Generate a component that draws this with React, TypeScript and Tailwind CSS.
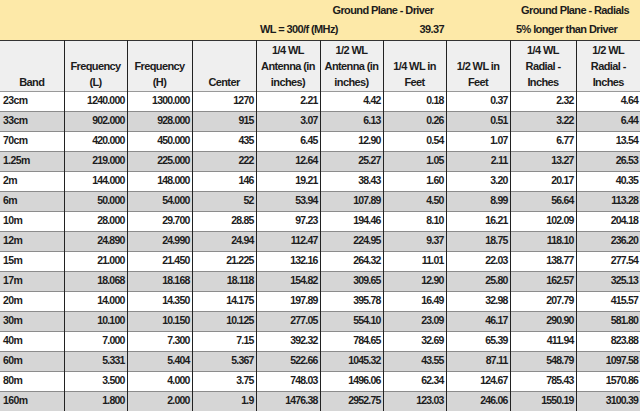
import React from 'react';

const widths = [64, 63, 65, 64, 64, 63, 63, 64, 66, 64];

const headers = [
  ['Band'],
  ['Frequency', '(L)'],
  ['Frequency', '(H)'],
  ['Center'],
  ['1/4 WL', 'Antenna (in', 'inches)'],
  ['1/2 WL', 'Antenna (in', 'inches)'],
  ['1/4 WL in', 'Feet'],
  ['1/2 WL in', 'Feet'],
  ['1/4 WL', 'Radial -', 'Inches'],
  ['1/2 WL', 'Radial -', 'Inches'],
];

const rows: string[][] = [
  ['23cm', '1240.000', '1300.000', '1270', '2.21', '4.42', '0.18', '0.37', '2.32', '4.64'],
  ['33cm', '902.000', '928.000', '915', '3.07', '6.13', '0.26', '0.51', '3.22', '6.44'],
  ['70cm', '420.000', '450.000', '435', '6.45', '12.90', '0.54', '1.07', '6.77', '13.54'],
  ['1.25m', '219.000', '225.000', '222', '12.64', '25.27', '1.05', '2.11', '13.27', '26.53'],
  ['2m', '144.000', '148.000', '146', '19.21', '38.43', '1.60', '3.20', '20.17', '40.35'],
  ['6m', '50.000', '54.000', '52', '53.94', '107.89', '4.50', '8.99', '56.64', '113.28'],
  ['10m', '28.000', '29.700', '28.85', '97.23', '194.46', '8.10', '16.21', '102.09', '204.18'],
  ['12m', '24.890', '24.990', '24.94', '112.47', '224.95', '9.37', '18.75', '118.10', '236.20'],
  ['15m', '21.000', '21.450', '21.225', '132.16', '264.32', '11.01', '22.03', '138.77', '277.54'],
  ['17m', '18.068', '18.168', '18.118', '154.82', '309.65', '12.90', '25.80', '162.57', '325.13'],
  ['20m', '14.000', '14.350', '14.175', '197.89', '395.78', '16.49', '32.98', '207.79', '415.57'],
  ['30m', '10.100', '10.150', '10.125', '277.05', '554.10', '23.09', '46.17', '290.90', '581.80'],
  ['40m', '7.000', '7.300', '7.15', '392.32', '784.65', '32.69', '65.39', '411.94', '823.88'],
  ['60m', '5.331', '5.404', '5.367', '522.66', '1045.32', '43.55', '87.11', '548.79', '1097.58'],
  ['80m', '3.500', '4.000', '3.75', '748.03', '1496.06', '62.34', '124.67', '785.43', '1570.86'],
  ['160m', '1.800', '2.000', '1.9', '1476.38', '2952.75', '123.03', '246.06', '1550.19', '3100.39'],
];

export default function App() {
  return (
    <div className="w-[640px] h-[411px] overflow-hidden bg-white text-[#1c1c1c] font-bold font-['Liberation_Sans',Arial,sans-serif]">
      <table className="table-fixed border-collapse w-[640px]">
        <colgroup>
          {widths.map((w, i) => (
            <col key={i} style={{ width: w }} />
          ))}
        </colgroup>
        <tbody>
          {/* yellow title rows */}
          <tr className="h-[20px] bg-[#fde9a8] text-[11px] tracking-[-0.6px]">
            <td colSpan={5}></td>
            <td colSpan={2} className="text-center align-bottom pb-[2px]">Ground Plane - Driver</td>
            <td></td>
            <td colSpan={2} className="text-center align-bottom pb-[2px]">Ground Plane - Radials</td>
          </tr>
          <tr className="h-[20px] bg-[#fde9a8] border-b border-[#333] text-[11px] tracking-[-0.6px]">
            <td colSpan={4}></td>
            <td colSpan={2} className="pl-1 align-bottom pb-[2px] whitespace-nowrap">WL = 300/f (MHz)</td>
            <td className="text-right pr-[2px] align-bottom pb-[2px]">39.37</td>
            <td></td>
            <td colSpan={2} className="pl-1.5 align-bottom pb-[2px] whitespace-nowrap">5% longer than Driver</td>
          </tr>

          {/* column headers */}
          <tr className="h-[51px] bg-[#efefef] border-b border-[#999] text-[11px] tracking-[-0.6px]">
            {headers.map((h, i) => (
              <td
                key={i}
                className={`align-bottom text-center leading-[16px] pb-[1px] ${i < 9 ? 'border-r border-[#222]' : ''}`}
              >
                {h.map((line, j) => (
                  <div key={j}>{line}</div>
                ))}
              </td>
            ))}
          </tr>

          {/* data */}
          {rows.map((r, ri) => (
            <tr
              key={ri}
              className={`h-[20px] border-b border-[#8c8c8c] text-[10.5px] tracking-[-0.8px] ${ri % 2 === 1 ? 'bg-[#d6d6d6]' : 'bg-white'}`}
            >
              {r.map((v, ci) => (
                <td
                  key={ci}
                  className={`whitespace-nowrap ${ci === 0 ? 'text-left pl-[3px] tracking-[-0.6px]' : 'text-right pr-[2px]'} ${ci < 9 ? 'border-r border-[#222]' : ''}`}
                >
                  {v}
                </td>
              ))}
            </tr>
          ))}
        </tbody>
      </table>
    </div>
  );
}
